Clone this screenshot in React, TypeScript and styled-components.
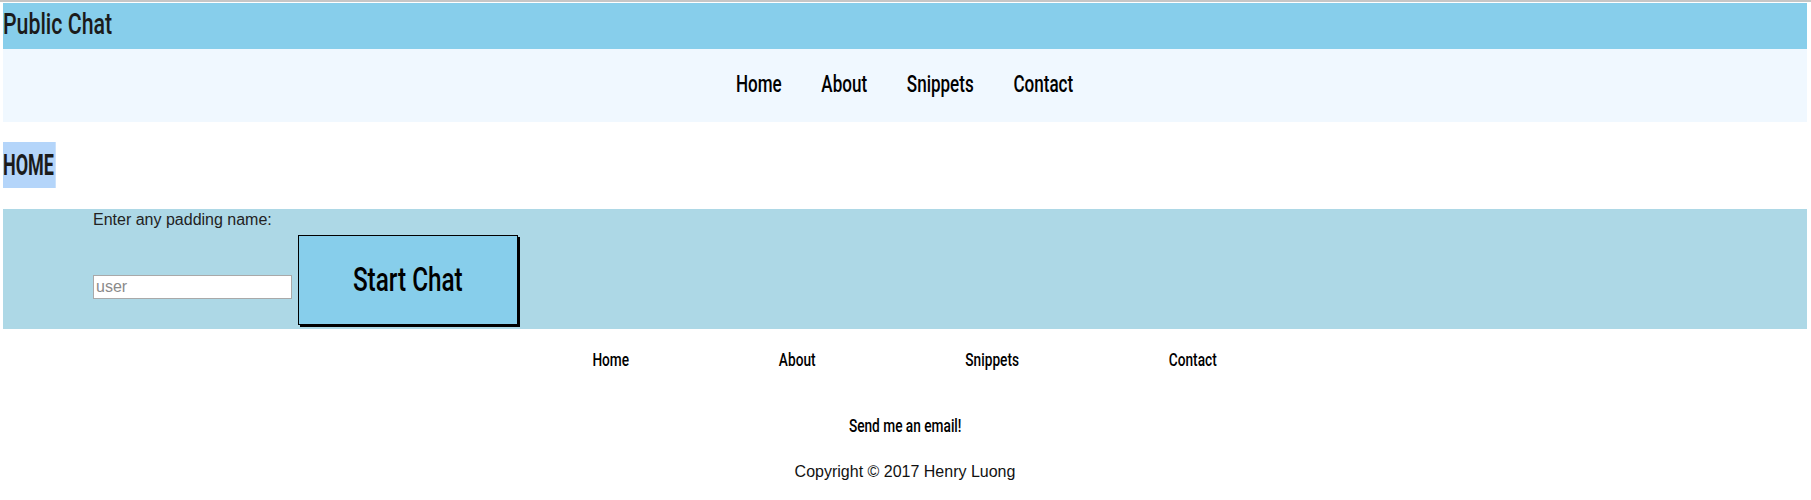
import React from "react";
import styled, { createGlobalStyle } from "styled-components";

const GlobalStyle = createGlobalStyle`
  html, body {
    margin: 0;
    padding: 0;
    background: #ffffff;
  }
  body {
    font-family: "Liberation Sans", Arial, sans-serif;
  }
`;

/* Display face: Roboto squeezed horizontally to imitate the condensed headline font */
const display = `Roboto, "Noto Sans", sans-serif`;

const Squeeze = styled.span<{ $x: number; $origin?: string }>`
  display: inline-block;
  transform: scaleX(${(p) => p.$x});
  transform-origin: ${(p) => p.$origin ?? "center"};
  white-space: nowrap;
`;

const TopRule = styled.div`
  height: 2px;
  background: #c6c6c6;
`;

const Page = styled.div`
  margin: 1px 4px 0 3px;
`;

const Header = styled.header`
  height: 46px;
  box-sizing: border-box;
  padding-bottom: 4px;
  background: #87ceeb;
  display: flex;
  align-items: center;
`;

const Title = styled.h1`
  margin: 0;
  font-family: ${display};
  font-weight: 500;
  font-size: 29px;
  color: #1b1b1b;
  line-height: 1;
`;

const Nav = styled.nav`
  height: 73px;
  box-sizing: border-box;
  padding-bottom: 3px;
  background: #f0f8ff;
  display: flex;
  justify-content: center;
  align-items: center;
`;

const LinkRow = styled.div<{ $gap: number; $x: number }>`
  display: flex;
  align-items: center;
  gap: ${(p) => p.$gap}px;
  transform: scaleX(${(p) => p.$x});
  transform-origin: center;
`;

const NavLink = styled.a<{ $size: number }>`
  font-family: ${display};
  font-weight: 500;
  font-size: ${(p) => p.$size}px;
  color: #000;
  text-decoration: none;
  line-height: 1;
`;

const HeadingRow = styled.div`
  display: flex;
  margin: 20px 0 21px;
`;

const Heading = styled.h2`
  margin: 0;
  height: 46px;
  padding-right: 3px;
  background: #b4d5fa;
  font-family: ${display};
  font-weight: 700;
  font-size: 29px;
  line-height: 46px;
  color: #1b1b1b;
  transform: scaleX(0.62);
  transform-origin: left;
`;

const FormSection = styled.section`
  height: 120px;
  box-sizing: border-box;
  background: #add8e6;
  padding: 2px 0 0 90px;
`;

const Label = styled.label`
  display: block;
  font-size: 16px;
  line-height: 18px;
  color: #222;
`;

const FormRow = styled.div`
  display: flex;
  align-items: flex-start;
  margin-top: 6px;
`;

const NameInput = styled.input`
  box-sizing: border-box;
  width: 199px;
  height: 24px;
  margin-top: 40px;
  border: 1px solid #a9a9a9;
  padding: 1px 2px;
  font-family: "Liberation Sans", Arial, sans-serif;
  font-size: 16px;
  background: #fff;
  outline: none;
  &::placeholder {
    color: #8a8a8a;
  }
`;

const StartButton = styled.button`
  box-sizing: border-box;
  width: 220px;
  height: 90px;
  margin-left: 6px;
  padding: 0 0 2px;
  background: #87ceeb;
  border: 1px solid #000;
  box-shadow: 2px 2px 0 #000;
  font-family: ${display};
  font-weight: 500;
  font-size: 34px;
  color: #000;
  cursor: pointer;
`;

const Footer = styled.footer`
  display: flex;
  flex-direction: column;
  align-items: center;
  padding-top: 21px;
`;

const Email = styled.a`
  margin-top: 47px;
  font-family: ${display};
  font-weight: 500;
  font-size: 19px;
  color: #000;
  text-decoration: none;
  line-height: 20px;
`;

const Copyright = styled.p`
  margin: 26px 0 0;
  font-family: "Liberation Sans", Arial, sans-serif;
  font-size: 16px;
  line-height: 20px;
  color: #111;
`;

const links = ["Home", "About", "Snippets", "Contact"];

export default function App() {
  return (
    <>
      <GlobalStyle />
      <TopRule />
      <Page>
        <Header>
          <Title>
            <Squeeze $x={0.735} $origin="left">
              Public Chat
            </Squeeze>
          </Title>
        </Header>
        <Nav>
          <LinkRow $gap={56} $x={0.71}>
            {links.map((l) => (
              <NavLink key={l} href="#" $size={24}>
                {l}
              </NavLink>
            ))}
          </LinkRow>
        </Nav>
        <HeadingRow>
          <Heading>HOME</Heading>
        </HeadingRow>
        <FormSection>
          <Label htmlFor="name">Enter any padding name:</Label>
          <FormRow>
            <NameInput id="name" placeholder="user" />
            <StartButton>
              <Squeeze $x={0.715}>Start Chat</Squeeze>
            </StartButton>
          </FormRow>
        </FormSection>
        <Footer>
          <LinkRow $gap={208} $x={0.72}>
            {links.map((l) => (
              <NavLink key={l} href="#" $size={19}>
                {l}
              </NavLink>
            ))}
          </LinkRow>
          <Email href="#">
            <Squeeze $x={0.72}>Send me an email!</Squeeze>
          </Email>
          <Copyright>Copyright © 2017 Henry Luong</Copyright>
        </Footer>
      </Page>
    </>
  );
}
